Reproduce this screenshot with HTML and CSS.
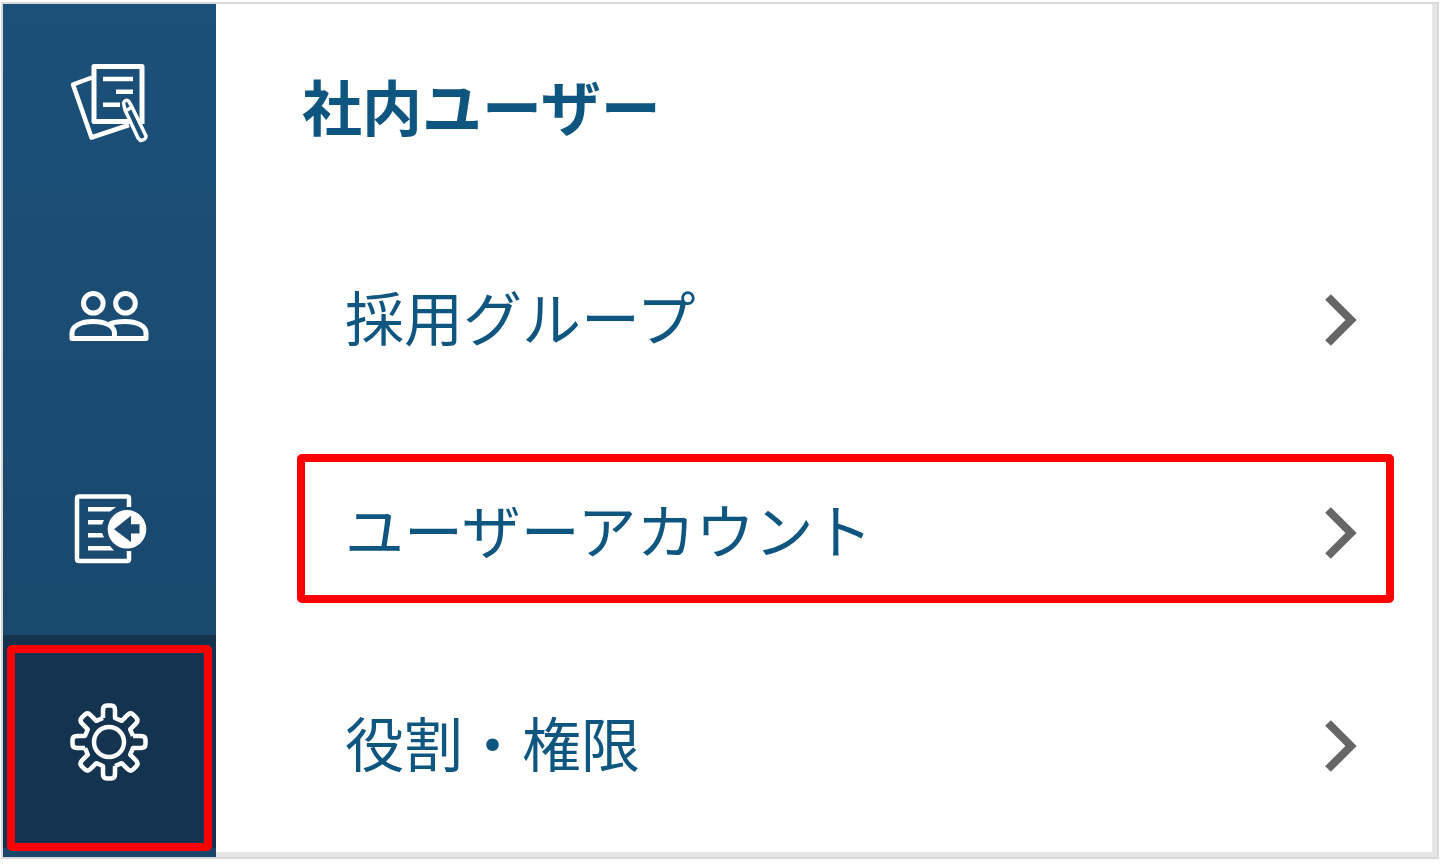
FILE: index.html
```html
<!DOCTYPE html>
<html lang="ja">
<head>
    <meta charset="UTF-8">
    <meta name="viewport" content="width=device-width, initial-scale=1.0">
    <title>社内ユーザー</title>
    <link rel="stylesheet" href="styles.css">
</head>
<body>
    <div class="container">
        <!-- サイドバー -->
        <nav class="sidebar" aria-label="メインメニュー">
            <a class="nav-item" href="#documents" aria-label="書類">
                <svg class="nav-icon" viewBox="0 0 80 80">
                    <path d="M23 14.5L4 21.500L22.500 74.500L60 62" stroke-width="4.500"/>
                    <path d="M61 58.500H25V3.500H73V61" stroke-width="5"/>
                    <path d="M34 16H64M47 28.700H64M34 41.700H51" stroke-width="4.500"/>
                    <path d="M54.500 40Q56 36 59.500 38L63 44L77 73Q77 77 71.500 77.500L69 75L56 47ZM56.500 48L63 44" stroke-width="3.500"/>
                </svg>
            </a>
            <a class="nav-item" href="#people" aria-label="ユーザー">
                <svg class="nav-icon" viewBox="0 0 80 80">
                    <g stroke-width="5">
                        <circle cx="24.300" cy="27.300" r="9.800"/>
                        <circle cx="56.500" cy="27.300" r="9.800"/>
                        <path d="M3 62.500V57C3 50 12 45.500 24 45.500S45.500 50 45.500 57V62.500Z"/>
                        <path d="M41 48C45 46 50 45.500 56 45.500C68 45.500 77 50 77 57V62.500H45"/>
                    </g>
                </svg>
            </a>
            <a class="nav-item" href="#import" aria-label="取り込み">
                <svg class="nav-icon" viewBox="0 0 80 80">
                    <path d="M60 18V9.500Q60 7.500 58 7.500H10Q8 7.500 8 9.500V70Q8 72 10 72H58Q60 72 60 70V62" stroke-width="4.500"/>
                    <path class="solid" d="M19 18H47L41 22.500H19ZM19 31H35L33 35.500H19ZM19 44H33L35 48.500H19ZM19 57H41L45 61.500H19Z"/>
                    <path class="solid" fill-rule="evenodd" d="M58 21A19.300 19.300 0 1 1 58 59.600A19.300 19.300 0 1 1 58 21ZM45 40.300L62 26.700V35.300H70.500V44.500H62V53Z"/>
                </svg>
            </a>
            <a class="nav-item active marked" href="#settings" aria-label="設定" aria-current="page">
                <svg class="nav-icon" viewBox="-40 -40 80 80">
                    <defs>
                        <path id="teeth" d="M-6 -24V-32Q-6 -36.500 -2 -36.500H2Q6 -36.500 6 -32V-24L12.700 -21.200L18.400 -26.900Q21.600 -30 24.400 -27.200L27.200 -24.400Q30 -21.600 26.900 -18.400L21.200 -12.700L24 -6"/>
                    </defs>
                    <g stroke-width="4.500">
                        <circle r="15"/>
                        <use href="#teeth"/>
                        <use href="#teeth" transform="rotate(90)"/>
                        <use href="#teeth" transform="rotate(180)"/>
                        <use href="#teeth" transform="rotate(270)"/>
                    </g>
                </svg>
            </a>
        </nav>

        <!-- 設定メニュー -->
        <main class="content">
            <h1>社内ユーザー</h1>
            <ul class="menu">
                <li>
                    <a class="menu-link" href="#groups">
                        <span class="menu-text">採用グループ</span>
                        <svg class="chevron" viewBox="0 0 32 52"><path d="M3 3L26 26L3 49"/></svg>
                    </a>
                </li>
                <li>
                    <a class="menu-link marked" href="#accounts">
                        <span class="menu-text">ユーザーアカウント</span>
                        <svg class="chevron" viewBox="0 0 32 52"><path d="M3 3L26 26L3 49"/></svg>
                    </a>
                </li>
                <li>
                    <a class="menu-link" href="#roles">
                        <span class="menu-text">役割・権限</span>
                        <svg class="chevron" viewBox="0 0 32 52"><path d="M3 3L26 26L3 49"/></svg>
                    </a>
                </li>
            </ul>
        </main>
    </div>
</body>
</html>
```
FILE: styles.css
```css
* {
    box-sizing: border-box;
}
body {
    margin: 0;
    padding: 2px 9px 9px 1px;
    background-color: #fff;
    font-family: "Noto Sans CJK JP", sans-serif;
    color: #0e5680;
}
a {
    color: inherit;
    text-decoration: none;
}
.container {
    display: flex;
    min-height: calc(100vh - 11px);
    border: 2px solid #d9d9d9;
    overflow: hidden;
}

/* サイドバー */
.sidebar {
    flex: 0 0 213px;
    margin-top: -8px;
    background: linear-gradient(#1c5079, #19466a);
}
.nav-item {
    position: relative;
    display: flex;
    align-items: center;
    justify-content: center;
    height: 213px;
    padding-right: 2px;
}
.nav-item.active {
    background-color: #14334f;
}
.nav-icon {
    width: 80px;
    height: 80px;
    fill: none;
    stroke: #fff;
    stroke-linejoin: round;
}
.nav-icon .solid {
    fill: #fff;
    stroke: none;
}

/* 設定メニュー */
.content {
    flex: 1;
    border-right: 5px solid #e6e6e6;
    border-bottom: 5px solid #e6e6e6;
}
h1 {
    display: flex;
    align-items: center;
    height: 209px;
    margin: 0;
    padding: 0 0 8px 86px;
    font-size: 60px;
    line-height: 80px;
}
.menu {
    margin: 0;
    padding: 0 38px 0 81px;
    list-style: none;
}
.menu-link {
    position: relative;
    display: flex;
    align-items: center;
    justify-content: space-between;
    height: 213px;
    padding: 0 37px 0 48px;
    font-size: 59px;
    line-height: 80px;
}
.menu-text {
    padding-bottom: 8px;
}
.chevron {
    width: 32px;
    height: 52px;
    fill: none;
    stroke: #666;
    stroke-width: 8;
}

/* 赤枠 */
.marked::after {
    content: "";
    position: absolute;
    border: 8px solid #f00;
    border-radius: 5px;
}
.nav-item.marked::after {
    inset: 10px 4px -3px;
}
.menu-link.marked::after {
    inset: 28px 0 36px;
}
```
